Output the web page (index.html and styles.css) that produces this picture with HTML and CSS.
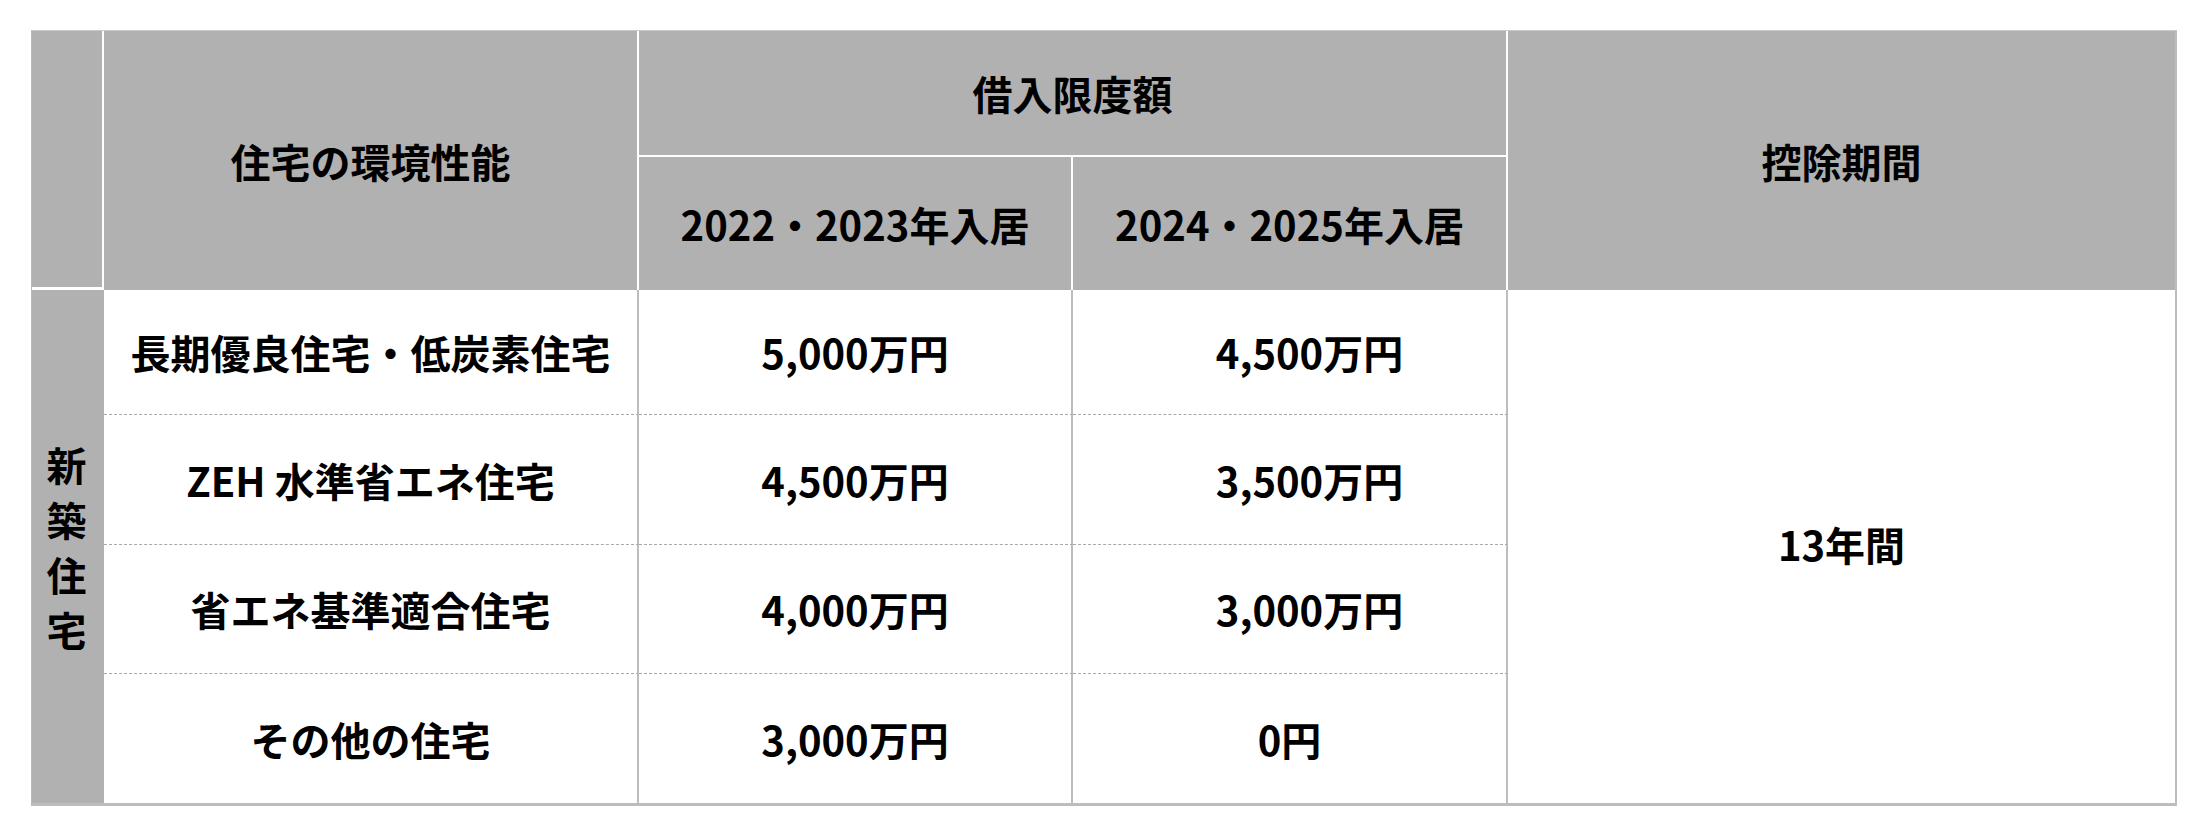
FILE: index.html
```html
<!DOCTYPE html>
<html lang="ja">
<head>
<meta charset="utf-8">
<title>住宅ローン控除 借入限度額</title>
<link rel="stylesheet" href="styles.css">
</head>
<body>
<div class="page">
  <table class="loan">
    <colgroup>
      <col class="c-side">
      <col class="c-name">
      <col class="c-v1">
      <col class="c-v2">
      <col class="c-period">
    </colgroup>
    <thead>
      <tr class="h1">
        <th rowspan="2" class="corner"></th>
        <th rowspan="2">住宅の環境性能</th>
        <th colspan="2" class="group">借入限度額</th>
        <th rowspan="2" class="last">控除期間</th>
      </tr>
      <tr class="h2">
        <th>2022・2023年入居</th>
        <th>2024・2025年入居</th>
      </tr>
    </thead>
    <tbody>
      <tr class="r1">
        <td rowspan="4" class="side"><div class="vert">新築住宅</div></td>
        <td class="name">長期優良住宅・低炭素住宅</td>
        <td class="val">5,000万円</td>
        <td class="val shift">4,500万円</td>
        <td rowspan="4" class="period">13年間</td>
      </tr>
      <tr class="r2">
        <td class="name">ZEH 水準省エネ住宅</td>
        <td class="val">4,500万円</td>
        <td class="val shift">3,500万円</td>
      </tr>
      <tr class="r3">
        <td class="name">省エネ基準適合住宅</td>
        <td class="val">4,000万円</td>
        <td class="val shift">3,000万円</td>
      </tr>
      <tr class="r4">
        <td class="name">その他の住宅</td>
        <td class="val">3,000万円</td>
        <td class="val">0円</td>
      </tr>
    </tbody>
  </table>
</div>
</body>
</html>
```

FILE: styles.css
```css
html, body {
  margin: 0;
  padding: 0;
  background: #ffffff;
}

body {
  font-family: "Noto Sans CJK JP", "Noto Sans", sans-serif;
  color: #000000;
}

.page {
  padding: 30px 0 0 31px;
}

.loan {
  width: 2143px;
  table-layout: fixed;
  border-collapse: separate;
  border-spacing: 0;
  border-top: 1px solid #c9c9c9;
  border-left: 1px solid #b9b9b9;
  border-right: 2px solid #bdbdbd;
  border-bottom: 3px solid #bdbdbd;
  font-size: 40px;
  font-weight: 700;
  line-height: 1;
}

.c-side { width: 72px; }
.c-name { width: 535px; }
.c-v1 { width: 434px; }
.c-v2 { width: 435px; }
.c-period { width: 667px; }

.loan th,
.loan td {
  padding: 0;
  text-align: center;
  vertical-align: middle;
  box-sizing: border-box;
  font-weight: 700;
}

.loan th {
  background: #b1b1b1;
  border-right: 2px solid #ffffff;
  border-bottom: 2px solid #ffffff;
}

.loan th.last {
  border-right: none;
  border-bottom: none;
}

.loan th.corner {
  border-bottom: 3px solid #ffffff;
}

.h1 th { height: 126px; }
.h2 th { height: 133px; border-bottom: none; }
.h2 th + th { border-right: 2px solid #ffffff; }
.loan thead th:nth-child(2) { border-bottom: none; }

.loan td.side {
  background: #b1b1b1;
  border-right: none;
}

.vert {
  width: 1em;
  margin: 0 auto;
  line-height: 55px;
  word-break: break-all;
  padding-right: 3px;
}

.loan td.name,
.loan td.val {
  border-right: 2px solid #bdbdbd;
  border-bottom: 1px dashed #a8a8a8;
}

.loan tr.r4 td.name,
.loan tr.r4 td.val {
  border-bottom: none;
}

.r1 td { height: 125px; }
.r2 td { height: 130px; }
.r3 td { height: 129px; }
.r4 td { height: 129px; }

.loan td.val.shift {
  padding-left: 40px;
}

.loan td.period {
  padding-bottom: 6px;
}
```
